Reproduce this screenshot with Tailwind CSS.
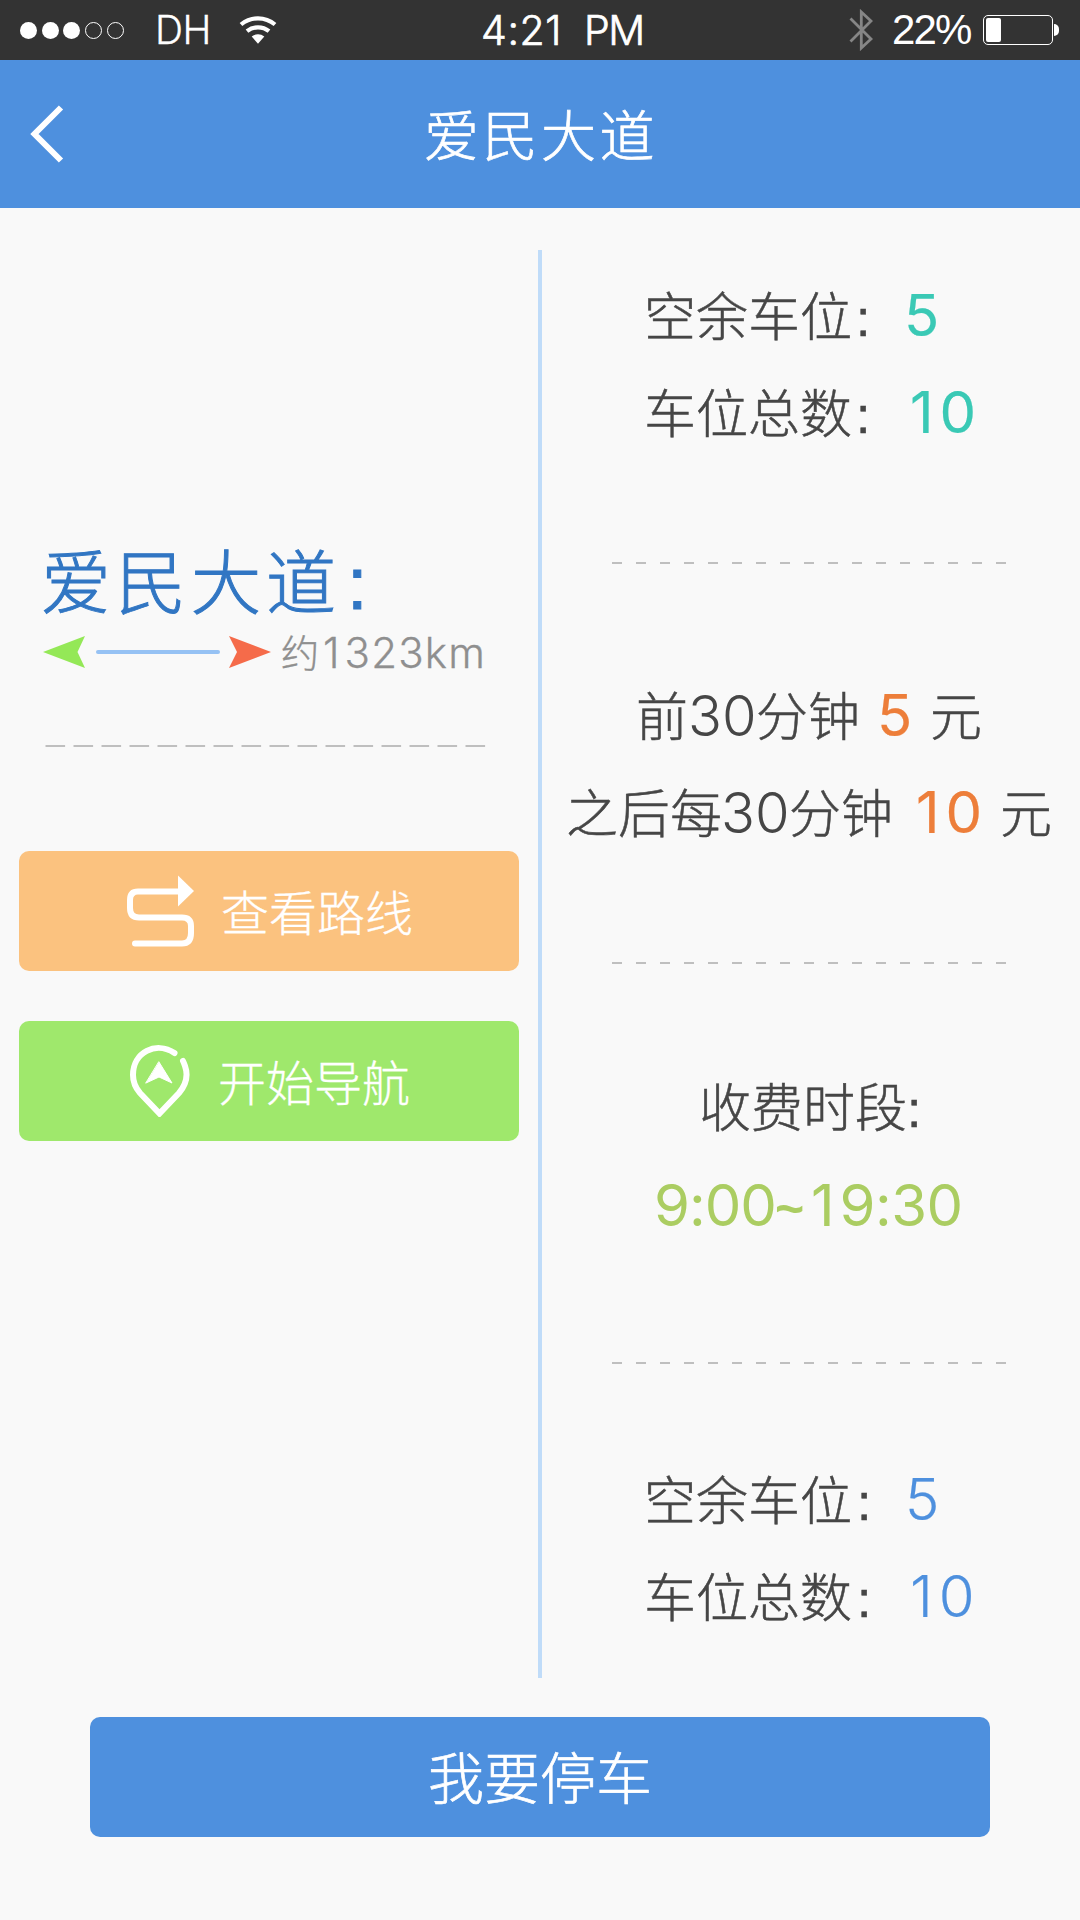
<!DOCTYPE html>
<html lang="zh-CN">
<head>
<meta charset="utf-8">
<title>爱民大道</title>
<script src="https://cdn.jsdelivr.net/npm/@tailwindcss/browser@4"></script>
</head>
<body class="h-[1920px] w-[1080px] overflow-hidden bg-[#f9f9f9] font-['Inter','Noto_Sans_CJK_SC',sans-serif] font-light text-[#464646]">
<!-- Status bar -->
<div class="flex h-[60px] items-center bg-[#333333] pl-[20px] text-white">
  <div class="flex w-[135px] items-center gap-[4.7px]">
    <i class="size-[17px] rounded-full bg-white"></i>
    <i class="size-[17px] rounded-full bg-white"></i>
    <i class="size-[17px] rounded-full bg-white"></i>
    <i class="size-[17px] rounded-full border border-white"></i>
    <i class="size-[17px] rounded-full border border-white"></i>
  </div>
  <span class="w-[84px] whitespace-nowrap text-[39px] leading-[60px] tracking-[-0.5px] [-webkit-text-stroke:0.3px]">DH</span>
  <svg class="h-[30px] w-[38px]" viewBox="0 0 38 30" fill="none" stroke="#fff" stroke-width="4.2">
    <path d="M2 9.5a26.5 26.5 0 0 1 34 0M8 16.200a17.500 17.500 0 0 1 22 0"/>
    <path d="M12.700 21.500a10.200 10.200 0 0 1 12.600 0L19 28.700z" fill="#fff" stroke="none"/>
  </svg>
  <div class="ml-[204px] flex w-[368px] whitespace-nowrap text-[41px] leading-[58px] [-webkit-text-stroke:0.7px]"><span class="w-[103px] tracking-[0.6px]">4:21</span><span class="tracking-[-1.500px]">PM</span></div>
  <svg class="h-[42px] w-[24px]" viewBox="0 0 24 42" fill="none" stroke="#868686" stroke-width="2.800"><path d="M1.500 9.500 22 30 12.300 39V3L22 12 1.500 32.500"/></svg>
  <span class="ml-[19px] w-[91px] whitespace-nowrap font-['Liberation_Sans'] text-[42px] leading-[60px] tracking-[-1.800px]">22%</span>
  <div class="flex items-center gap-px">
    <div class="h-[30px] w-[70px] rounded-[5px] border border-white p-[2px]"><div class="h-[24px] w-[15px] rounded-[2px] bg-white"></div></div>
    <div class="h-[12px] w-[5px] rounded-r-full bg-white"></div>
  </div>
</div>
<!-- Title bar -->
<header class="flex h-[148px] items-center bg-[#4e90de] pl-[30px] text-white">
  <svg class="h-[58px] w-[34px]" viewBox="0 0 34 58" fill="none" stroke="#fff" stroke-width="6"><path d="M31 2.500 4.500 29 31 55.500"/></svg>
  <h1 class="ml-[360px] pt-[5px] text-[55px] leading-[143px] tracking-[3.500px] [-webkit-text-stroke:0.7px]">爱民大道</h1>
</header>
<main class="flex pt-[42px]">
  <section class="w-[538px]">
    <h2 class="mt-[284px] flex h-[91px] items-baseline whitespace-nowrap pl-[41px] text-[70px] leading-[100px] text-[#3176c3] [-webkit-text-stroke:1px]"><span class="w-[306px] tracking-[5px]">爱民大道</span><span class="font-['Liberation_Sans'] text-[74px]">:</span></h2>
    <div class="mt-[3px] flex h-[48px] items-center pl-[43px]">
      <svg class="h-[34px] w-[228px]" viewBox="0 0 228 34"><path d="M0 17 42 1 34.500 17 42 33z" fill="#94e857"/><path d="M55 17H175" stroke="#96c2f4" stroke-width="4" stroke-linecap="round"/><path d="M228 17 186 1 194 17 186 33z" fill="#f56b4a"/></svg>
      <span class="ml-[10px] pt-[2px] text-[38px] leading-[48px] text-[#8f8f8f] [-webkit-text-stroke:0.4px]">约</span><span class="ml-[4px] pt-[2px] text-[42px] leading-[48px] tracking-[1.200px] text-[#8f8f8f] [-webkit-text-stroke:0.3px]"><span class="tracking-[5px]">1</span>323km</span>
    </div>
    <svg class="mt-[69px] ml-[45px] block h-[2px] w-[441px]"><path d="M.500 1H440.500" stroke="#bfbfbf" stroke-width="2" stroke-dasharray="19.600 8.400"/></svg>
    <button class="mt-[104px] ml-[19px] flex h-[120px] w-[500px] items-center rounded-[10px] bg-[#fbc27f] pl-[108px] text-[48px] text-white">
      <svg class="h-[72px] w-[68px]" viewBox="0 0 68 72" fill="none" stroke="#fff" stroke-width="6" stroke-linecap="round"><path d="M52 16.500H11Q3 16.500 3 25V33Q3 42.500 12 42.500H55Q64 42.500 64 51V58Q64 68.500 55 68.500H8"/><path d="M51 0.500 67 16 51 31.500z" fill="#fff" stroke="none"/></svg>
      <span class="ml-[26px] pt-[5px] leading-[115px] [-webkit-text-stroke:0.3px]">查看路线</span>
    </button>
    <button class="mt-[50px] ml-[19px] flex h-[120px] w-[500px] items-center rounded-[10px] bg-[#9fe86c] pl-[111px] text-[48px] text-white">
      <svg class="h-[72px] w-[60px]" viewBox="0 0 60 72" fill="none" stroke="#fff" stroke-width="6" stroke-linecap="round"><path d="M44.500 8C26-4 3 7 3 30Q3 40 10 48L29.500 68.500 49 48Q60 35 55 21Q54 18 53 16"/><path d="M29 17 42 38 29 32 16 38z" fill="#fff" stroke="#fff" stroke-width="1"/></svg>
      <span class="ml-[28px] pt-[5px] leading-[115px] [-webkit-text-stroke:0.3px]">开始导航</span>
    </button>
  </section>
  <div class="h-[1428px] w-[4px] bg-[#c0dcf9]"></div>
  <section class="w-[538px] text-[52px] leading-[98px] [-webkit-text-stroke:0.5px]">
    <div class="h-[312px] pt-[16px]">
      <div class="flex h-[97px] items-baseline whitespace-nowrap pl-[102px]"><span class="w-[212px]">空余车位</span><span class="w-[48px] font-['Liberation_Sans']">:</span><b class="text-[58px] font-normal text-[#3ac9b5] [-webkit-text-stroke:0.2px]">5</b></div>
      <div class="flex h-[98px] items-baseline whitespace-nowrap pl-[102px]"><span class="w-[212px]">车位总数</span><span class="w-[54px] font-['Liberation_Sans']">:</span><b class="text-[58px] font-normal text-[#3ac9b5] [-webkit-text-stroke:0.2px]"><span class="tracking-[6px]">1</span>0</b></div>
    </div>
    <svg class="ml-[70px] block h-[2px] w-[395px]"><path d="M0 1H394" stroke="#bfbfbf" stroke-width="2" stroke-dasharray="10 14"/></svg>
    <div class="h-[398px] pt-[102px]">
      <div class="flex h-[97px] items-baseline whitespace-nowrap pl-[94px]"><span class="w-[52px]">前</span><span class="w-[68px] text-[56px] [-webkit-text-stroke:0px]">30</span><span class="w-[121px]">分钟</span><b class="w-[53px] text-[58px] font-normal text-[#ed7e3a] [-webkit-text-stroke:0.2px]">5</b><span>元</span></div>
      <div class="flex h-[98px] items-baseline whitespace-nowrap pl-[24px]"><span class="w-[155px]">之后每</span><span class="w-[68px] text-[56px] [-webkit-text-stroke:0px]">30</span><span class="w-[127px]">分钟</span><b class="w-[84px] text-[58px] font-normal text-[#ed7e3a] [-webkit-text-stroke:0.2px]"><span class="tracking-[6px]">1</span>0</b><span>元</span></div>
    </div>
    <svg class="ml-[70px] block h-[2px] w-[395px]"><path d="M0 1H394" stroke="#bfbfbf" stroke-width="2" stroke-dasharray="10 14"/></svg>
    <div class="h-[398px] pt-[96px]">
      <div class="flex h-[96px] items-baseline whitespace-nowrap pl-[157px]"><span class="w-[208px]">收费时段</span><span class="font-['Liberation_Sans']">:</span></div>
      <div class="flex h-[98px] items-baseline whitespace-nowrap pl-[112px] text-[58px] font-normal text-[#abcd62] [-webkit-text-stroke:0px]"><span class="w-[121px] tracking-[-1px]">9:00</span><span class="w-[36px] font-['Liberation_Sans'] text-[50px] font-bold">~</span><span class="tracking-[-0.5px]"><span class="tracking-[5px]">1</span>9:30</span></div>
    </div>
    <svg class="ml-[70px] block h-[2px] w-[395px]"><path d="M0 1H394" stroke="#bfbfbf" stroke-width="2" stroke-dasharray="10 14"/></svg>
    <div class="h-[314px] pt-[86px]">
      <div class="flex h-[97px] items-baseline whitespace-nowrap pl-[102px]"><span class="w-[213px]">空余车位</span><span class="w-[48px] font-['Liberation_Sans']">:</span><b class="text-[58px] font-light text-[#4e90de] [-webkit-text-stroke:0.2px]">5</b></div>
      <div class="flex h-[98px] items-baseline whitespace-nowrap pl-[102px]"><span class="w-[213px]">车位总数</span><span class="w-[53px] font-['Liberation_Sans']">:</span><b class="text-[58px] font-light text-[#4e90de] [-webkit-text-stroke:0.2px]"><span class="tracking-[6px]">1</span>0</b></div>
    </div>
  </section>
</main>
<button class="mt-[39px] ml-[90px] flex h-[120px] w-[900px] items-center rounded-[10px] bg-[#4e90de] pt-[5px] pl-[338px] text-[56px] leading-[115px] text-white [-webkit-text-stroke:0.7px]">我要停车</button>
</body>
</html>
